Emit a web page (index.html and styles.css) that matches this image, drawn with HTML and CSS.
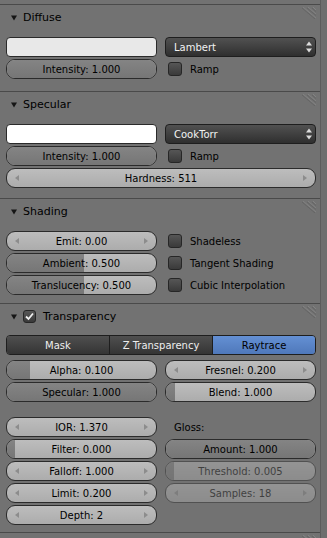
FILE: index.html
```html
<!DOCTYPE html>
<html lang="en">
<head>
    <meta charset="UTF-8">
    <meta name="viewport" content="width=device-width, initial-scale=1.0">
    <title>Material</title>
    <link rel="stylesheet" href="styles.css">
</head>
<body>
<div class="screen">
    <div class="region">

        <!-- Diffuse -->
        <section class="panel">
            <div class="panel-head">
                <svg class="tri" width="6" height="6" viewBox="0 0 6 6"><path d="M0 0.5H6L3 5.5Z"/></svg>
                <span class="title">Diffuse</span>
                <svg class="grip" width="16" height="12" viewBox="0 0 16 12"><path class="hi" d="M2 0L15 11M7 0L15 7M12 0L15 3"/><path class="lo" d="M1 1L14 12M6 1L15 8.5M11 1L15 4.5"/></svg>
            </div>
            <div class="panel-body pb-12">
                <div class="cols">
                    <div class="col">
                        <div class="swatch swatch-diffuse"></div>
                        <div class="slider"><div class="fill" style="width:100%"></div><span class="label">Intensity: 1.000</span></div>
                    </div>
                    <div class="col">
                        <div class="menu"><span>Lambert</span><svg width="6" height="12" viewBox="0 0 6 12"><path d="M3 0.5L6 4.5H0ZM0 7.5H6L3 11.5Z"/></svg></div>
                        <div class="check"><span class="box"></span>Ramp</div>
                    </div>
                </div>
            </div>
        </section>

        <!-- Specular -->
        <section class="panel">
            <div class="panel-head">
                <svg class="tri" width="6" height="6" viewBox="0 0 6 6"><path d="M0 0.5H6L3 5.5Z"/></svg>
                <span class="title">Specular</span>
                <svg class="grip" width="16" height="12" viewBox="0 0 16 12"><path class="hi" d="M2 0L15 11M7 0L15 7M12 0L15 3"/><path class="lo" d="M1 1L14 12M6 1L15 8.5M11 1L15 4.5"/></svg>
            </div>
            <div class="panel-body pb-10">
                <div class="cols">
                    <div class="col">
                        <div class="swatch swatch-specular"></div>
                        <div class="slider"><div class="fill" style="width:100%"></div><span class="label">Intensity: 1.000</span></div>
                    </div>
                    <div class="col">
                        <div class="menu"><span>CookTorr</span><svg width="6" height="12" viewBox="0 0 6 12"><path d="M3 0.5L6 4.5H0ZM0 7.5H6L3 11.5Z"/></svg></div>
                        <div class="check"><span class="box"></span>Ramp</div>
                    </div>
                </div>
                <div class="num full">
                    <svg class="arr" width="4" height="6" viewBox="0 0 4 6"><path d="M4 0V6L0 3Z"/></svg>
                    <span class="label">Hardness: 511</span>
                    <svg class="arr" width="4" height="6" viewBox="0 0 4 6"><path d="M0 0V6L4 3Z"/></svg>
                </div>
            </div>
        </section>

        <!-- Shading -->
        <section class="panel">
            <div class="panel-head">
                <svg class="tri" width="6" height="6" viewBox="0 0 6 6"><path d="M0 0.5H6L3 5.5Z"/></svg>
                <span class="title">Shading</span>
                <svg class="grip" width="16" height="12" viewBox="0 0 16 12"><path class="hi" d="M2 0L15 11M7 0L15 7M12 0L15 3"/><path class="lo" d="M1 1L14 12M6 1L15 8.5M11 1L15 4.5"/></svg>
            </div>
            <div class="panel-body pb-8">
                <div class="cols">
                    <div class="col">
                        <div class="num">
                            <svg class="arr" width="4" height="6" viewBox="0 0 4 6"><path d="M4 0V6L0 3Z"/></svg>
                            <span class="label">Emit: 0.00</span>
                            <svg class="arr" width="4" height="6" viewBox="0 0 4 6"><path d="M0 0V6L4 3Z"/></svg>
                        </div>
                        <div class="slider"><div class="fill" style="width:52%"></div><span class="label">Ambient: 0.500</span></div>
                        <div class="slider"><div class="fill" style="width:52%"></div><span class="label">Translucency: 0.500</span></div>
                    </div>
                    <div class="col">
                        <div class="check"><span class="box"></span>Shadeless</div>
                        <div class="check"><span class="box"></span>Tangent Shading</div>
                        <div class="check"><span class="box"></span>Cubic Interpolation</div>
                    </div>
                </div>
            </div>
        </section>

        <!-- Transparency -->
        <section class="panel">
            <div class="panel-head">
                <svg class="tri" width="6" height="6" viewBox="0 0 6 6"><path d="M0 0.5H6L3 5.5Z"/></svg>
                <span class="box box-head"><svg width="11" height="11" viewBox="0 0 11 11"><path d="M2 5.5L4.5 8L9 2.5"/></svg></span>
                <span class="title">Transparency</span>
                <svg class="grip" width="16" height="12" viewBox="0 0 16 12"><path class="hi" d="M2 0L15 11M7 0L15 7M12 0L15 3"/><path class="lo" d="M1 1L14 12M6 1L15 8.5M11 1L15 4.5"/></svg>
            </div>
            <div class="panel-body pt-6 pb-7">
                <div class="tabs">
                    <div class="tab">Mask</div>
                    <div class="tab">Z Transparency</div>
                    <div class="tab active">Raytrace</div>
                </div>
                <div class="cols gap-top">
                    <div class="col">
                        <div class="slider"><div class="fill" style="width:23px"></div><span class="label">Alpha: 0.100</span></div>
                        <div class="slider"><div class="fill" style="width:100%"></div><span class="label">Specular: 1.000</span></div>
                    </div>
                    <div class="col">
                        <div class="num">
                            <svg class="arr" width="4" height="6" viewBox="0 0 4 6"><path d="M4 0V6L0 3Z"/></svg>
                            <span class="label">Fresnel: 0.200</span>
                            <svg class="arr" width="4" height="6" viewBox="0 0 4 6"><path d="M0 0V6L4 3Z"/></svg>
                        </div>
                        <div class="slider"><div class="fill" style="width:9px"></div><span class="label">Blend: 1.000</span></div>
                    </div>
                </div>
                <div class="cols gap-big">
                    <div class="col">
                        <div class="num">
                            <svg class="arr" width="4" height="6" viewBox="0 0 4 6"><path d="M4 0V6L0 3Z"/></svg>
                            <span class="label">IOR: 1.370</span>
                            <svg class="arr" width="4" height="6" viewBox="0 0 4 6"><path d="M0 0V6L4 3Z"/></svg>
                        </div>
                        <div class="slider"><div class="fill" style="width:8px"></div><span class="label">Filter: 0.000</span></div>
                        <div class="num">
                            <svg class="arr" width="4" height="6" viewBox="0 0 4 6"><path d="M4 0V6L0 3Z"/></svg>
                            <span class="label">Falloff: 1.000</span>
                            <svg class="arr" width="4" height="6" viewBox="0 0 4 6"><path d="M0 0V6L4 3Z"/></svg>
                        </div>
                        <div class="num">
                            <svg class="arr" width="4" height="6" viewBox="0 0 4 6"><path d="M4 0V6L0 3Z"/></svg>
                            <span class="label">Limit: 0.200</span>
                            <svg class="arr" width="4" height="6" viewBox="0 0 4 6"><path d="M0 0V6L4 3Z"/></svg>
                        </div>
                        <div class="num">
                            <svg class="arr" width="4" height="6" viewBox="0 0 4 6"><path d="M4 0V6L0 3Z"/></svg>
                            <span class="label">Depth: 2</span>
                            <svg class="arr" width="4" height="6" viewBox="0 0 4 6"><path d="M0 0V6L4 3Z"/></svg>
                        </div>
                    </div>
                    <div class="col">
                        <div class="text-row">Gloss:</div>
                        <div class="slider"><div class="fill" style="width:100%"></div><span class="label">Amount: 1.000</span></div>
                        <div class="slider disabled"><div class="fill" style="width:8px"></div><span class="label">Threshold: 0.005</span></div>
                        <div class="num disabled">
                            <svg class="arr" width="4" height="6" viewBox="0 0 4 6"><path d="M4 0V6L0 3Z"/></svg>
                            <span class="label">Samples: 18</span>
                            <svg class="arr" width="4" height="6" viewBox="0 0 4 6"><path d="M0 0V6L4 3Z"/></svg>
                        </div>
                    </div>
                </div>
            </div>
        </section>

        <!-- next panel, cut off -->
        <section class="panel">
            <div class="panel-head">
                <svg class="grip" width="16" height="12" viewBox="0 0 16 12"><path class="hi" d="M2 0L15 11M7 0L15 7M12 0L15 3"/><path class="lo" d="M1 1L14 12M6 1L15 8.5M11 1L15 4.5"/></svg>
            </div>
        </section>

    </div>
    <div class="strip"></div>
</div>
</body>
</html>
```

FILE: styles.css
```css
body {
    margin: 0;
    width: 327px;
    height: 538px;
    overflow: hidden;
    background-color: #727272;
    font-family: "DejaVu Sans", sans-serif;
    font-size: 10px;
    color: #000;
}

.screen {
    display: flex;
    height: 538px;
}

.region {
    width: 320px;
    padding-top: 4px;
    border-right: 1px solid #5c5c5c;
    overflow: hidden;
}

.strip {
    flex: 1;
    background-color: #6e6e6e;
}

/* panels */

.panel {
    border-top: 1px solid #4a4a4a;
}

.panel-head {
    display: flex;
    align-items: center;
    height: 25px;
    padding: 0 3px 0 11px;
}

.tri {
    fill: #151515;
    margin-right: 6px;
}

.title {
    font-size: 11px;
    color: #000;
}

.grip {
    margin-left: auto;
    align-self: flex-start;
    margin-top: 2px;
    fill: none;
    stroke-width: 1;
}

.grip .hi {
    stroke: #838383;
}

.grip .lo {
    stroke: #656565;
}

.panel-body {
    padding: 7px 4px 7px 6px;
}

.pt-6 { padding-top: 6px; }
.pb-7 { padding-bottom: 7px; }
.pb-8 { padding-bottom: 8px; }
.pb-10 { padding-bottom: 10px; }
.pb-12 { padding-bottom: 12px; }

.cols {
    display: grid;
    grid-template-columns: 151px 151px;
    column-gap: 8px;
}

.gap-top {
    margin-top: 5px;
}

.gap-big {
    margin-top: 15px;
}

.col {
    display: flex;
    flex-direction: column;
    gap: 2px;
}

/* widgets */

.swatch {
    height: 18px;
    border: 1px solid #2a2a2a;
    border-radius: 4px;
}

.swatch-diffuse {
    background-color: #e8e8e8;
}

.swatch-specular {
    background-color: #ffffff;
}

.menu {
    height: 18px;
    display: flex;
    align-items: center;
    justify-content: space-between;
    padding: 0 3px 0 8px;
    border: 1px solid #1e1e1e;
    border-radius: 4px;
    background: linear-gradient(#515151, #2f2f2f);
    color: #f2f2f2;
}

.menu svg {
    fill: #dcdcdc;
}

.slider,
.num {
    position: relative;
    height: 18px;
    border: 1px solid #2b2b2b;
    border-radius: 9px;
    overflow: hidden;
    background: linear-gradient(#bdbdbd, #acacac);
    display: flex;
    align-items: center;
    justify-content: center;
}

.num {
    justify-content: space-between;
    padding: 0 8px;
}

.full {
    margin-top: 2px;
}

.fill {
    position: absolute;
    left: 0;
    top: 0;
    bottom: 0;
    background: linear-gradient(#848484, #767676);
}

.label {
    position: relative;
    white-space: nowrap;
}

.arr {
    fill: #8c8c8c;
}

.disabled {
    opacity: 0.45;
}

.check {
    height: 20px;
    display: flex;
    align-items: center;
    padding-left: 3px;
}

.box {
    width: 12px;
    height: 12px;
    margin-right: 8px;
    border: 1px solid #262626;
    border-radius: 3px;
    background: linear-gradient(#565656, #3a3a3a);
}

.box-head {
    display: flex;
    align-items: center;
    justify-content: center;
    width: 11px;
    height: 11px;
    margin-right: 7px;
}

.box-head svg {
    fill: none;
    stroke: #f0f0f0;
    stroke-width: 1.8;
}

.text-row {
    height: 20px;
    display: flex;
    align-items: center;
    padding-left: 9px;
}

.tabs {
    display: flex;
    height: 18px;
    border: 1px solid #1e1e1e;
    border-radius: 4px;
    overflow: hidden;
}

.tab {
    flex: 1;
    display: flex;
    align-items: center;
    justify-content: center;
    background: linear-gradient(#4f4f4f, #343434);
    color: #eeeeee;
}

.tab + .tab {
    border-left: 1px solid #1e1e1e;
}

.tab.active {
    background: linear-gradient(#6490d4, #4f78ba);
    color: #000;
}
```
